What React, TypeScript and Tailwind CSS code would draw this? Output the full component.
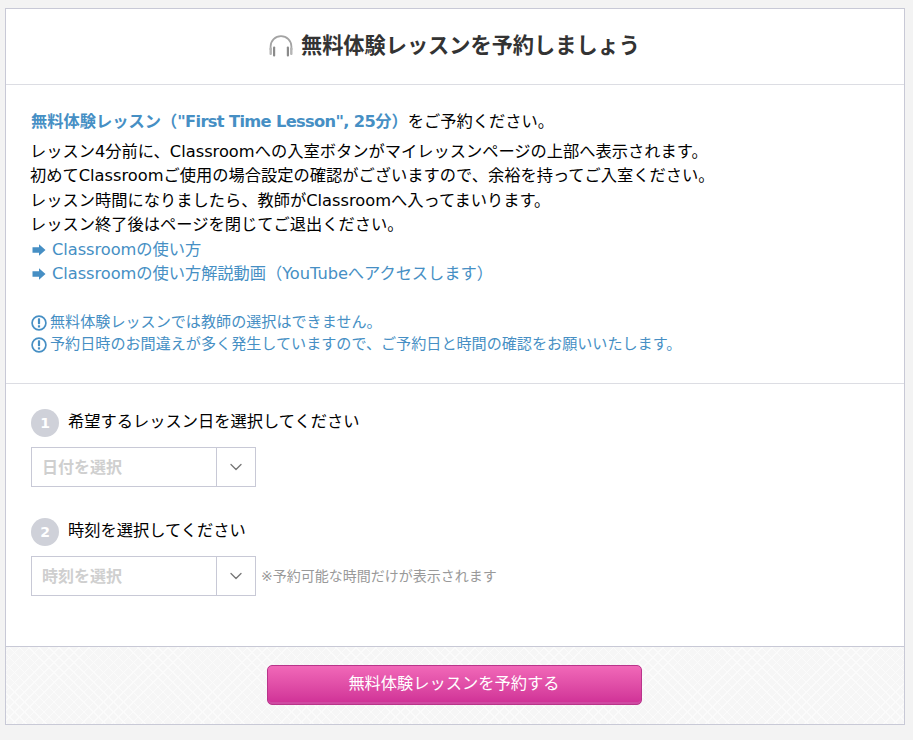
import { ChevronDown } from "lucide-react";

const FONT = "font-['DejaVu_Sans','Noto_Sans_CJK_JP',sans-serif]";

function Headphones() {
  return (
    <svg width="24" height="22" viewBox="0 0 24 22" className="shrink-0">
      <path d="M1.6 15V11.5a10.4 10.4 0 0 1 20.8 0V15" fill="none" stroke="#a3a3a3" strokeWidth="1.8" />
      <rect x="0.5" y="12.5" width="2.4" height="7.5" rx="1" fill="#b5b5b5" />
      <rect x="4" y="11.5" width="2.2" height="10" rx="1" fill="#8a8a8a" />
      <rect x="17.8" y="11.5" width="2.2" height="10" rx="1" fill="#8a8a8a" />
      <rect x="21.1" y="12.5" width="2.4" height="7.5" rx="1" fill="#b5b5b5" />
    </svg>
  );
}

function ArrowLink({ children }: { children: React.ReactNode }) {
  return (
    <div className="flex items-center">
      <svg width="14" height="12" viewBox="0 0 14 12" className="ml-[1px] mr-[6px] shrink-0">
        <path d="M0.5 3.2H7V0.3L13.5 6L7 11.7V8.8H0.5Z" fill="#468fc4" />
      </svg>
      <span className="text-[#468fc4] tracking-[-0.05px]">{children}</span>
    </div>
  );
}

function Notice({ children }: { children: React.ReactNode }) {
  return (
    <div className="flex items-center h-[22px] text-[15.1px] text-[#468fc4]">
      <svg width="16" height="16" viewBox="0 0 16 16" className="mr-[3px] shrink-0">
        <circle cx="8" cy="8" r="6.9" fill="none" stroke="#468fc4" strokeWidth="1.7" />
        <rect x="6.9" y="3.2" width="2.2" height="6" rx="0.7" fill="#468fc4" />
        <rect x="6.9" y="10.2" width="2.2" height="2.2" rx="0.5" fill="#468fc4" />
      </svg>
      {children}
    </div>
  );
}

function Step({ n, label }: { n: number; label: string }) {
  return (
    <div className="flex items-center h-7 gap-[9px]">
      <span className="w-7 h-7 rounded-full bg-[#cfd1d9] text-white text-sm font-bold flex items-center justify-center">
        {n}
      </span>
      <span className="text-[16.25px] text-black -mt-[2px]">{label}</span>
    </div>
  );
}

function FakeSelect({ placeholder }: { placeholder: string }) {
  return (
    <div className="flex w-[225px] h-10 border border-[#c8c9d6] bg-white">
      <div className="flex-1 flex items-center pl-[10px] pt-[1px] text-base font-bold text-[#cfcfcf]">{placeholder}</div>
      <div className="w-[39px] border-l border-[#c8c9d6] flex items-center justify-center">
        <ChevronDown size={20} strokeWidth={1.6} className="text-[#777]" />
      </div>
    </div>
  );
}

export default function App() {
  return (
    <div className={`${FONT} min-h-[740px] bg-[#f3f3f3] pt-2 pl-[5px] pr-2`}>
      <div className="w-[900px] border border-[#c8c9d6] bg-white">
        <div className="h-[76px] border-b border-[#dcdde3] pb-[2px] pr-[1px] flex items-center justify-center gap-[8px]">
          <Headphones />
          <h1 className="text-[21.2px] font-bold text-[#333]">無料体験レッスンを予約しましょう</h1>
        </div>

        <div className="h-[299px] border-b border-[#dcdde3] pt-[25px] pl-[25px] text-[16.25px] leading-[24.5px] text-black">
          <p>
            <span className="font-bold text-[#468fc4]">
              無料体験レッスン（<span className="tracking-[-0.65px]">"First Time Lesson", 25</span>分）
            </span>
            をご予約ください。
          </p>
          <p className="mt-[5px] -ml-[1px]">レッスン4分前に、Classroomへの入室ボタンがマイレッスンページの上部へ表示されます。</p>
          <p className="-ml-[1px]">初めてClassroomご使用の場合設定の確認がございますので、余裕を持ってご入室ください。</p>
          <p className="-ml-[1px]">レッスン時間になりましたら、教師がClassroomへ入ってまいります。</p>
          <p className="-ml-[1px]">レッスン終了後はページを閉じてご退出ください。</p>
          <ArrowLink>Classroomの使い方</ArrowLink>
          <ArrowLink>Classroomの使い方解説動画（YouTubeへアクセスします）</ArrowLink>
          <div className="mt-[25px]">
            <Notice>無料体験レッスンでは教師の選択はできません。</Notice>
            <Notice>予約日時のお間違えが多く発生していますので、ご予約日と時間の確認をお願いいたします。</Notice>
          </div>
        </div>

        <div className="h-[263px] border-b border-[#c8c9d6] pt-[25px] pl-[25px]">
          <Step n={1} label="希望するレッスン日を選択してください" />
          <div className="mt-[10px]">
            <FakeSelect placeholder="日付を選択" />
          </div>
          <div className="mt-[31px]">
            <Step n={2} label="時刻を選択してください" />
          </div>
          <div className="mt-[10px] flex items-center gap-[5px]">
            <FakeSelect placeholder="時刻を選択" />
            <span className="text-sm text-[#999]">※予約可能な時間だけが表示されます</span>
          </div>
        </div>

        <div className="h-[77px] pb-[2px] pr-[2px] flex items-center justify-center bg-[#f6f6f6] bg-[repeating-linear-gradient(45deg,#fbfbfb_0,#fbfbfb_1px,transparent_1px,transparent_7px),repeating-linear-gradient(-45deg,#fbfbfb_0,#fbfbfb_1px,transparent_1px,transparent_7px)]">
          <button
            type="button"
            className="w-[375px] h-10 rounded-[5px] border border-[#b9348b] bg-gradient-to-b from-[#f168b8] to-[#cf2f96] shadow-[inset_0_-2px_0_#cf4aa2] text-[16.25px] text-white"
          >
            無料体験レッスンを予約する
          </button>
        </div>
      </div>
    </div>
  );
}
